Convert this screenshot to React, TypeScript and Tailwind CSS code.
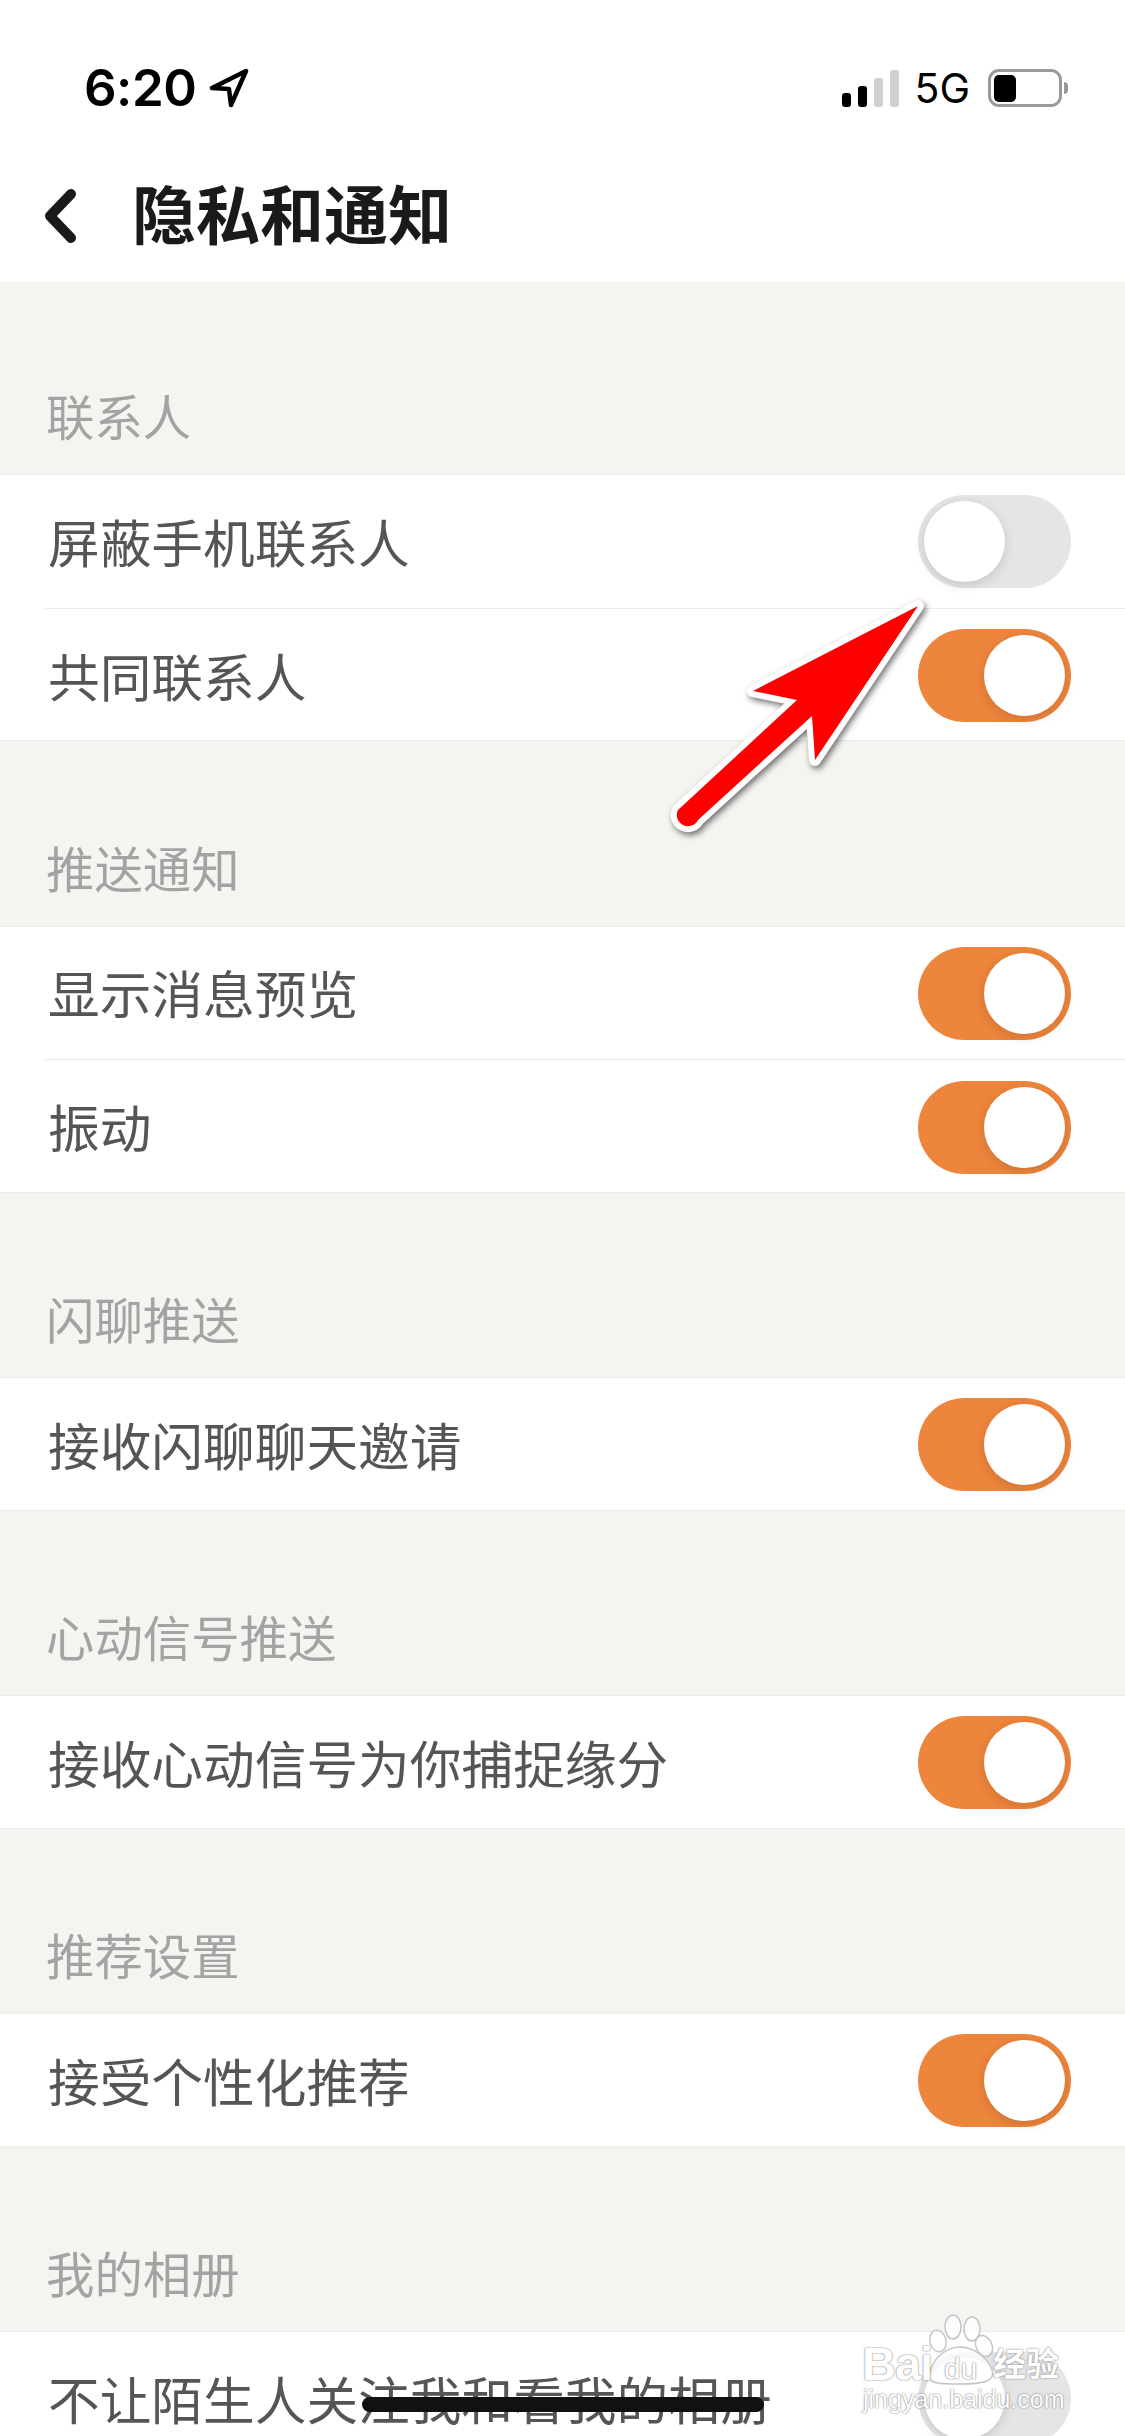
const cjk = "font-['Noto_Sans_CJK_SC','Noto_Sans_CJK_JP',sans-serif]"

type Row = { label: string; on: boolean }
type Group = { title: string; rows: Row[] }

const groups: Group[] = [
  {
    title: "联系人",
    rows: [
      { label: "屏蔽手机联系人", on: false },
      { label: "共同联系人", on: true },
    ],
  },
  {
    title: "推送通知",
    rows: [
      { label: "显示消息预览", on: true },
      { label: "振动", on: true },
    ],
  },
  { title: "闪聊推送", rows: [{ label: "接收闪聊聊天邀请", on: true }] },
  { title: "心动信号推送", rows: [{ label: "接收心动信号为你捕捉缘分", on: true }] },
  { title: "推荐设置", rows: [{ label: "接受个性化推荐", on: true }] },
  { title: "我的相册", rows: [{ label: "不让陌生人关注我和看我的相册", on: false }] },
]

function Toggle({ on }: { on: boolean }) {
  return (
    <div
      className={`mt-[2px] flex h-[93px] w-[153px] shrink-0 items-center rounded-full px-[6px] ${
        on ? "justify-end bg-[#ee853c]" : "justify-start bg-[#e5e5e7]"
      }`}
    >
      <div className="h-[81px] w-[81px] rounded-full bg-white shadow-[0_3px_12px_rgba(0,0,0,0.14)]" />
    </div>
  )
}

function StatusBar() {
  return (
    <div className="flex h-[140px] items-start justify-between pl-[84px] pr-[57px] pt-[63px]">
      <div className="flex items-center gap-[13px]">
        <span className="font-['Inter',sans-serif] text-[51px] font-semibold leading-[50px] tracking-[-0.5px] text-black">
          6:20
        </span>
        <svg width="40" height="40" viewBox="0 0 40 40" fill="none">
          <path
            d="M37 3 L3 20 L20 21 L22 37 Z"
            stroke="#000"
            strokeWidth="4.5"
            strokeLinejoin="round"
          />
        </svg>
      </div>
      <div className="flex items-center pt-[6px]">
        <div className="flex h-[38px] items-end gap-[7px]">
          <div className="h-[14px] w-[9px] rounded-[3px] bg-black" />
          <div className="h-[21px] w-[9px] rounded-[3px] bg-black" />
          <div className="h-[29px] w-[9px] rounded-[3px] bg-[#cfcfcf]" />
          <div className="h-[37px] w-[9px] rounded-[3px] bg-[#cfcfcf]" />
        </div>
        <span className="ml-[15px] font-['Inter',sans-serif] text-[41px] font-normal leading-[38px] text-black">
          5G
        </span>
        <div className="ml-[18px] flex items-center">
          <div className="flex h-[38px] w-[74px] items-center rounded-[11px] border-[3px] border-[#999999] pl-[3px]">
            <div className="h-[27px] w-[22px] rounded-[5px] bg-black" />
          </div>
          <div className="ml-[2px] h-[12px] w-[4px] rounded-r-full bg-[#999999]" />
        </div>
      </div>
    </div>
  )
}

function Header() {
  return (
    <div className="bg-white">
      <StatusBar />
      <div className="flex h-[142px] items-start pl-[42px] pt-[36px]">
        <svg width="36" height="54" viewBox="0 0 36 54" fill="none" className="mt-[13px]">
          <path
            d="M29 5 L8 27 L29 49"
            stroke="#1a1a1a"
            strokeWidth="10"
            strokeLinecap="round"
            strokeLinejoin="round"
          />
        </svg>
        <h1 className={`ml-[54px] text-[64px] font-bold leading-[70px] text-[#1a1a1a] ${cjk}`}>
          隐私和通知
        </h1>
      </div>
    </div>
  )
}

function Section({ group, first }: { group: Group; first: boolean }) {
  return (
    <section>
      <div className={`flex items-end pb-[31px] pl-[46px] ${first ? "h-[192px]" : "h-[184.5px]"}`}>
        <span className={`text-[48.4px] leading-[56px] text-[#a3a3a3] ${cjk}`}>{group.title}</span>
      </div>
      <div className="bg-white shadow-[inset_0_1px_0_#ececec,inset_0_-1px_0_#ececec]">
        {group.rows.map((row, i) => (
          <div
            key={row.label}
            className={`ml-[45px] flex h-[133.5px] items-center justify-between pl-[3px] pr-[54px] ${
              i > 0 ? "border-t border-[#ececec]" : ""
            }`}
          >
            <span className={`text-[51.7px] leading-[60px] text-[#555555] ${cjk}`}>{row.label}</span>
            <Toggle on={row.on} />
          </div>
        ))}
      </div>
    </section>
  )
}

// 截图上的红色标注箭头
function AnnotationArrow() {
  const d = "M918 606 L753 691 L797 700 L678 810 A 11 11 0 0 0 698 820 L812 716 L815 760 Z"
  return (
    <svg
      width="1125"
      height="1000"
      viewBox="0 0 1125 1000"
      fill="none"
      className="pointer-events-none absolute left-0 top-0"
    >
      <path
        d={d}
        fill="#ffffff"
        stroke="#ffffff"
        strokeWidth="12"
        strokeLinejoin="round"
        className="drop-shadow-[2px_3px_3px_rgba(0,0,0,0.55)]"
      />
      <path d={d} fill="#ff0000" />
    </svg>
  )
}

// 百度经验水印
function Watermark() {
  const glow = "[text-shadow:0_0_2px_rgba(110,110,110,0.75),0_0_1px_rgba(110,110,110,0.75)]"
  return (
    <div className="pointer-events-none absolute left-[860px] top-[2310px] h-[110px] w-[210px] text-white">
      <svg
        width="210"
        height="110"
        viewBox="0 0 210 110"
        fill="#ffffff"
        fillOpacity="0.75"
        stroke="#c4c4c4"
        strokeWidth="1.5"
        className="absolute left-0 top-0"
      >
        <ellipse cx="93" cy="17" rx="8" ry="12" />
        <ellipse cx="112" cy="19" rx="8" ry="12" />
        <ellipse cx="78" cy="31" rx="8" ry="11" transform="rotate(-15 78 31)" />
        <ellipse cx="124" cy="36" rx="8" ry="11" transform="rotate(-25 124 36)" />
        <path d="M70 62 C74 46 88 37 100 37 C114 37 128 48 132 60 C136 72 122 74 100 74 C78 74 66 74 70 62 Z" />
      </svg>
      <span
        className={`absolute left-[2px] top-[27px] font-['Liberation_Sans',sans-serif] text-[47px] font-bold leading-[54px] tracking-[-1px] ${glow}`}
      >
        Bai
      </span>
      <span
        className={`absolute left-[84px] top-[42px] font-['Liberation_Sans',sans-serif] text-[30px] leading-[34px] ${glow}`}
      >
        du
      </span>
      <span className={`absolute left-[133px] top-[30px] text-[33px] font-bold leading-[44px] ${cjk} ${glow}`}>
        经验
      </span>
      <span
        className={`absolute left-[3px] top-[74px] font-['Liberation_Sans',sans-serif] text-[25px] leading-[30px] ${glow}`}
      >
        jingyan.baidu.com
      </span>
    </div>
  )
}

export default function App() {
  return (
    <main className="relative h-[2436px] w-[1125px] overflow-hidden bg-[#f5f4f1]">
      <Header />
      {groups.map((group, i) => (
        <Section key={group.title} group={group} first={i === 0} />
      ))}
      <AnnotationArrow />
      {/* 底部黑条 */}
      <div className="absolute left-[362px] top-[2397px] h-[15px] w-[402px] rounded-full bg-[#111111]" />
      <Watermark />
    </main>
  )
}
